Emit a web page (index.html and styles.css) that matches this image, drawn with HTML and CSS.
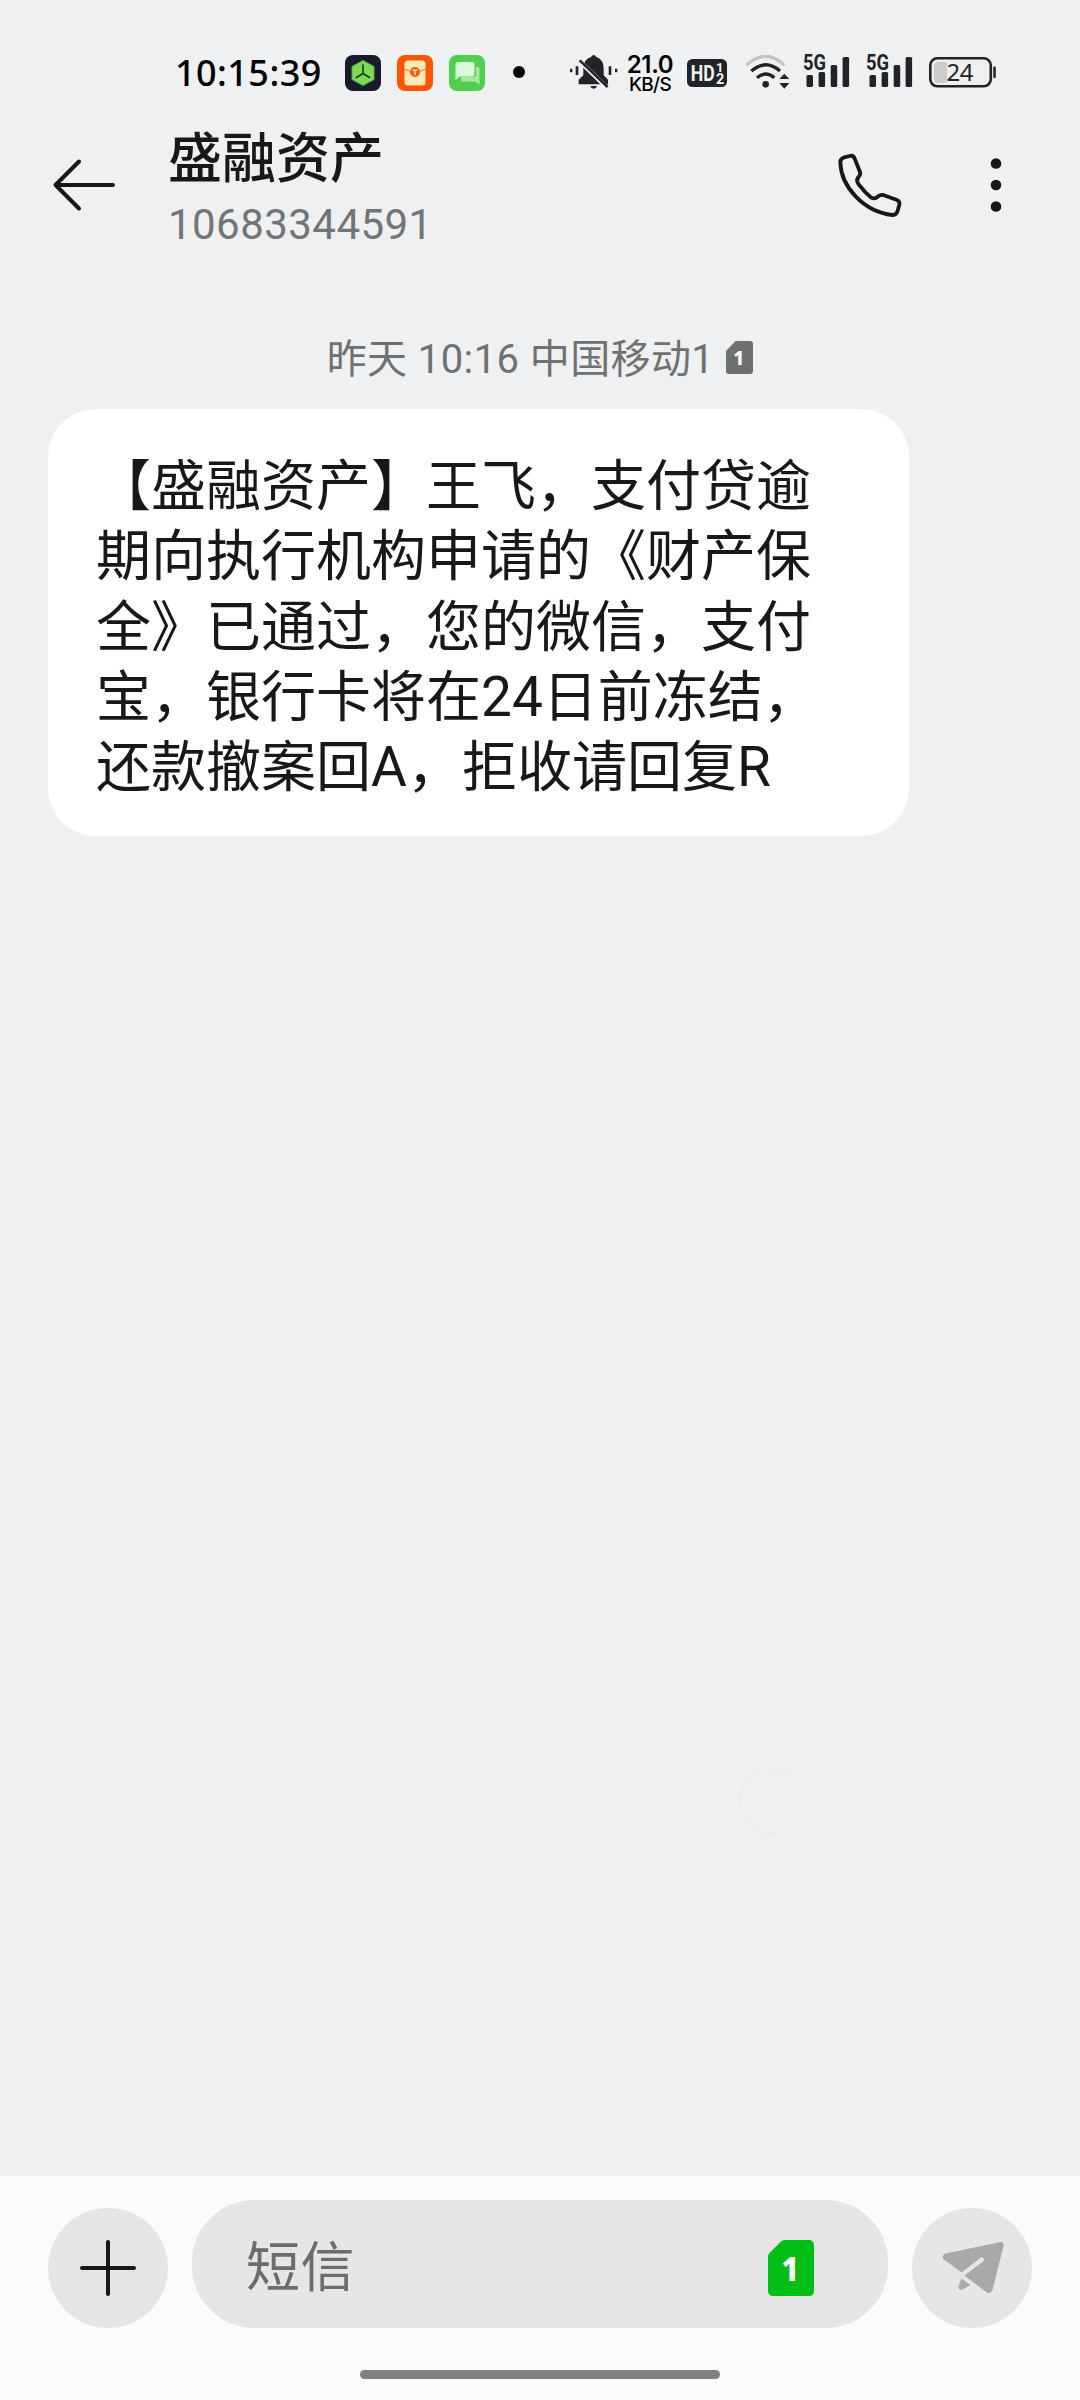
FILE: index.html
```html
<!DOCTYPE html>
<html lang="zh-CN">
<head>
<meta charset="utf-8">
<title>短信</title>
<link rel="stylesheet" href="styles.css">
</head>
<body>
<div class="screen">
  <div class="status">
    <span class="clock">10:15:39</span>
    <div class="apps">
      <svg width="36" height="36" viewBox="0 0 36 36"><rect width="36" height="36" rx="8" fill="#171b2b"/><path d="M18 5.500 29 11.500v13L18 30.500 7 24.500v-13z" fill="#7ed957" stroke="#55b83a" stroke-width="1"/><path d="M18 10v9M18 18.500l-6.500 4M18 18.500l6.500 4" stroke="#1b3a1f" stroke-width="1.600" stroke-linecap="round"/></svg>
      <svg width="36" height="36" viewBox="0 0 36 36"><rect width="36" height="36" rx="8" fill="#fb5607"/><rect x="7.500" y="5.500" width="21" height="25" rx="3.500" fill="#ffe9b5"/><path d="M7.500 14q10.500 6 21 0" fill="none" stroke="#e98a3c" stroke-width="1.300"/><circle cx="18" cy="17" r="5" fill="#f2571b"/><path d="M15.500 15.200h5M18 15.200v4.800" stroke="#ffe3a5" stroke-width="1.500"/></svg>
      <svg width="36" height="36" viewBox="0 0 36 36"><rect width="36" height="36" rx="8" fill="#4fcf4c"/><path d="M27 12h1.500q2 0 2 2v15.500l-4-3H14q-2 0-2-2v-2.500h12.500q2.500 0 2.500-2.500z" fill="#a5e8a0"/><path d="M9 7h14.500q2 0 2 2v10.500q0 2-2 2H11l-4.500 3.500V9q0-2 2.500-2z" fill="#dcf8da"/></svg>
    </div>
    <i class="dot"></i>
    <svg class="bell" width="49" height="36" viewBox="28 42 147 108" fill="#222326">
      <path d="M57 133v-14l14-13V84q0-26 24-34 2-5 7-5t7 5q23 8 23 34v22l13 13v14z"/>
      <path d="M92 138h20q-2 8-10 8t-10-8z"/>
      <path d="M54 58l91 88" stroke="#eff0f2" stroke-width="13"/>
      <path d="M60 61l84 80" stroke="#222326" stroke-width="7.500"/>
      <path d="M31 86h7v11h-7zM48 79h8v26h-8zM147 79h8v26h-8zM166 86h7v11h-7z"/>
    </svg>
    <div class="rate"><b>21.0</b><span>KB/S</span></div>
    <svg class="hd" width="40" height="36" viewBox="0 0 40 36"><rect y="5" width="40" height="28" rx="5.500" fill="#222326"/><g fill="#eff0f2" font-family="Roboto, sans-serif" font-weight="700"><text x="3.800" y="26.700" font-size="22" textLength="24" lengthAdjust="spacingAndGlyphs">HD</text><text x="29" y="17.700" font-size="13">1</text><text x="29" y="30" font-size="14.500">2</text></g></svg>
    <svg class="wifi" width="45" height="36" viewBox="558 42 135 108" fill="none"><path d="M562 76q57-54 115 0" stroke="#c3c4c6" stroke-width="9"/><path d="M577 93q43-37 86 0" stroke="#222326" stroke-width="10"/><path d="M594 113q26-22 52 0" stroke="#222326" stroke-width="10"/><circle cx="620" cy="133" r="10" fill="#222326"/><path d="M676 101l15 16h-30zM676 146l15-17h-30z" fill="#222326"/></svg>
    <svg class="signal" width="47" height="36" viewBox="0 0 47 36" fill="#222326"><text x="0" y="16" font-family="Roboto, sans-serif" font-weight="700" font-size="21.500" textLength="23" lengthAdjust="spacingAndGlyphs">5G</text><rect x="3.500" y="21" width="6.500" height="12" rx="1.500"/><rect x="15.600" y="18" width="6.500" height="15" rx="1.500"/><rect x="27.700" y="11" width="6.500" height="22" rx="1.500"/><rect x="39.600" y="3" width="6.500" height="30" rx="1.500"/></svg>
    <svg class="signal" width="47" height="36" viewBox="0 0 47 36" fill="#222326"><text x="0" y="16" font-family="Roboto, sans-serif" font-weight="700" font-size="21.500" textLength="23" lengthAdjust="spacingAndGlyphs">5G</text><rect x="3.500" y="21" width="6.500" height="12" rx="1.500"/><rect x="15.600" y="18" width="6.500" height="15" rx="1.500"/><rect x="27.700" y="11" width="6.500" height="22" rx="1.500"/><rect x="39.600" y="3" width="6.500" height="30" rx="1.500"/></svg>
    <svg class="battery" width="68" height="36" viewBox="0 0 68 36"><rect x="1.300" y="4.300" width="60.500" height="28" rx="7" fill="none" stroke="#222326" stroke-width="2.600"/><path d="M18 8H9q-4 0-4 4v13q0 4 4 4h9z" fill="#cbccce"/><rect x="64.300" y="12.500" width="2.500" height="11.500" rx="1" fill="#222326"/><text x="17.500" y="27" font-family="Noto Sans, sans-serif" font-size="24" textLength="27" fill="#222326">24</text></svg>
  </div>

  <div class="header">
    <svg class="back" width="64" height="56" viewBox="0 0 64 56" fill="none" stroke="#17181a" stroke-width="4" stroke-linecap="round" stroke-linejoin="round"><path d="M61 28H4M27 4.500 3.500 28 27 51.500"/></svg>
    <div class="contact">
      <div class="name">盛融资产</div>
      <div class="number">10683344591</div>
    </div>
    <svg class="phone" width="66" height="66" viewBox="110 66 198 198" fill="none" stroke="#17181a" stroke-width="11.500" stroke-linejoin="round"><path d="M120 98Q119 87 129 83L148 78Q160 75 164 88L179 126Q182 134 173 143Q167 152 175 163Q194 188 213 203Q222 208 230 202Q238 193 249 195L290 210Q299 214 297 224L291 245Q287 256 276 255C190 245 122 170 120 98Z"/></svg>
    <svg class="more" width="12" height="56" viewBox="0 0 12 56" fill="#17181a"><circle cx="6" cy="6.500" r="5.300"/><circle cx="6" cy="28" r="5.300"/><circle cx="6" cy="49.500" r="5.300"/></svg>
  </div>

  <div class="thread">
    <div class="stamp"><span>昨天 10:16 中国移动1</span>
      <svg width="27" height="33" viewBox="0 0 27 33"><path d="M9.500 0H24q3 0 3 3v27q0 3-3 3H3q-3 0-3-3V10z" fill="#6f7070"/><text x="13" y="23.500" text-anchor="middle" font-family="Noto Sans, sans-serif" font-weight="800" font-size="19" fill="#fff">1</text></svg>
    </div>
    <div class="bubble">【盛融资产】王飞，支付贷逾<br>期向执行机构申请的《财产保<br>全》已通过，您的微信，支付<br>宝，银行卡将在24日前冻结，<br>还款撤案回A，拒收请回复R</div>
    <svg class="ripple" width="68" height="68" viewBox="0 0 68 68" fill="none" stroke="#ecedef" stroke-width="3"><path d="M54 8A32 32 0 1 0 46 64"/></svg>
  </div>

  <div class="composer">
    <div class="row">
      <div class="round"><svg width="60" height="60" viewBox="0 0 60 60" stroke="#17181a" stroke-width="4" stroke-linecap="round"><path d="M30 4v52M4 30h52"/></svg></div>
      <div class="field"><span class="hint">短信</span>
        <svg width="46" height="56" viewBox="0 0 46 56"><path d="M13 1.500Q14.500 0 17 0H40.500Q46 0 46 5.500V50.500Q46 56 40.500 56H5.500Q0 56 0 50.500V17Q0 14.500 1.500 13z" fill="#03be14"/><text x="22.300" y="40.500" text-anchor="middle" font-family="Noto Sans, sans-serif" font-weight="800" font-size="34" textLength="18" lengthAdjust="spacingAndGlyphs" fill="#fff">1</text></svg>
      </div>
      <div class="round"><svg width="120" height="120" viewBox="0 0 120 120"><path d="M33.500 45.500 87.500 34.200Q92 33.500 91.500 38L80.500 82Q79 86.500 75 84.500L52.300 67.500 71 53.800Q73.500 50.500 69.500 49L49.700 64.500 31.800 51.500Q29 47.500 33.500 45.500Z" fill="#a9a9a9"/><path d="M49.500 70.500 58.500 77 50.500 81.500Q46.500 82.500 46.500 78.500Q48 74 49.500 70.500Z" fill="#a9a9a9"/></svg></div>
    </div>
    <div class="home"></div>
  </div>
</div>
</body>
</html>
```
FILE: styles.css
```css
* { box-sizing: border-box; }
body { margin: 0; background: #eff0f2; }
svg { display: block; flex: none; overflow: visible; }

.screen {
  width: 1080px;
  height: 2400px;
  display: flex;
  flex-direction: column;
  background: #eff0f2;
  color: #17181a;
  font-family: Roboto, "Noto Sans CJK SC", sans-serif;
  text-spacing-trim: space-all;
}

/* status bar */
.status {
  height: 118px;
  padding: 54px 0 0 175px;
  display: flex;
  align-items: flex-start;
}
.clock {
  width: 170px;
  padding-top: 1px;
  font: 500 36px/36px "Noto Sans", sans-serif;
  letter-spacing: 0.45px;
  color: #000;
  white-space: nowrap;
}
.apps { display: flex; gap: 16px; padding-top: 1px; }
.dot { width: 12px; height: 12px; margin: 12px 0 0 28px; border-radius: 50%; background: #000; }
.bell { margin-left: 44px; }
.rate {
  width: 48px;
  margin-left: 8px;
  padding-top: 1px;
  display: flex;
  flex-direction: column;
  align-items: center;
  font-family: Inter, sans-serif;
  color: #000;
  white-space: nowrap;
}
.rate b { font-size: 24px; line-height: 20px; font-weight: 600; letter-spacing: -0.3px; }
.rate span { font-size: 19px; line-height: 19px; font-weight: 500; letter-spacing: -0.7px; }
.hd { margin-left: 13px; }
.wifi { margin-left: 18px; }
.signal { margin-left: 13px; }
.signal + .signal { margin-left: 16px; }
.battery { margin-left: 16px; }

/* conversation header */
.header {
  height: 134px;
  display: flex;
  align-items: center;
  padding: 0 78px 0 52px;
}
.contact { flex: 1; margin-left: 52px; padding-top: 2px; }
.name { font-size: 54px; line-height: 78px; font-weight: 500; }
.number { font-size: 42px; line-height: 52px; letter-spacing: 0.45px; color: #737475; }
.more { margin-left: 87px; }

/* messages */
.thread { flex: 1; position: relative; padding: 76px 48px 0; }
.stamp {
  height: 58px;
  margin-bottom: 23px;
  display: flex;
  justify-content: center;
  align-items: center;
  gap: 12px;
  font-size: 40px;
  letter-spacing: 0.4px;
  color: #6f7070;
  white-space: nowrap;
}
.stamp span { padding-bottom: 2px; }
.bubble {
  width: 861px;
  height: 427px;
  padding: 42px 40px 0 48px;
  border-radius: 48px;
  background: #fff;
  font-size: 55px;
  line-height: 70.3px;
  white-space: nowrap;
}
.ripple { position: absolute; left: 736px; top: 1516px; }

/* composer */
.composer {
  height: 224px;
  padding: 24px 48px 0;
  background: #fbfbfb;
}
.row { display: flex; align-items: flex-end; gap: 24px; }
.round {
  width: 120px;
  height: 120px;
  border-radius: 50%;
  background: #e6e6e6;
  display: flex;
  align-items: center;
  justify-content: center;
}
.field {
  flex: 1;
  height: 128px;
  border-radius: 62px;
  background: #e6e6e6;
  padding: 8px 74px 0 54px;
  display: flex;
  align-items: center;
  justify-content: space-between;
  font-size: 54px;
  color: #6c6c6c;
}
.hint { padding-bottom: 10px; letter-spacing: 0.5px; }
.home { width: 360px; height: 9px; margin: 42px auto 0; border-radius: 5px; background: #808080; }
```
